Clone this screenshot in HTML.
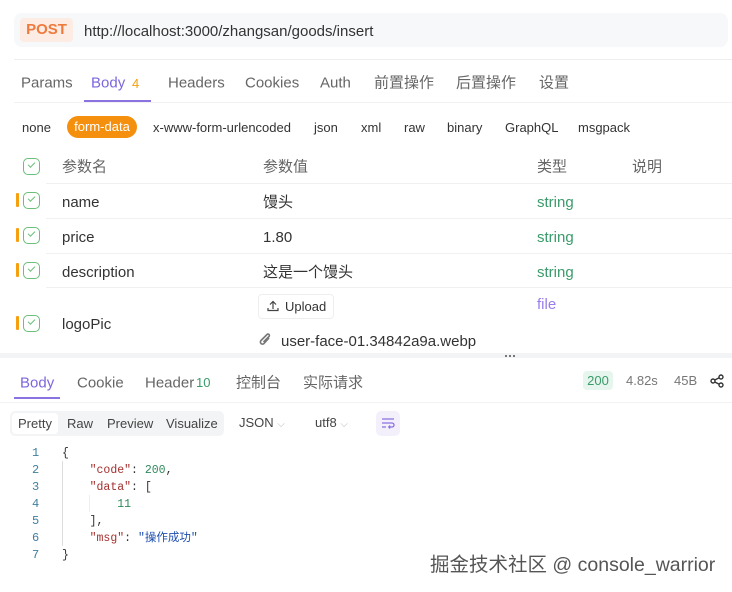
<!DOCTYPE html>
<html><head><meta charset="utf-8"><style>
*{margin:0;padding:0;box-sizing:border-box}
body{width:732px;height:592px;background:#fff;position:relative;overflow:hidden;font-family:"Liberation Sans","Noto Sans CJK SC",sans-serif;color:#333;line-height:1.2}
.a{position:absolute;white-space:nowrap}
.t{font-size:15px;color:#666;transform:translateY(1.5px)}
.s{font-size:13px;color:#333}
.cb{position:absolute;width:17px;height:17px;border:1.5px solid #6bbf7a;border-radius:5px}
.cb:after{content:"";position:absolute;left:4px;top:3px;width:6px;height:3px;border-left:1.3px solid #6bbf7a;border-bottom:1.3px solid #6bbf7a;transform:rotate(-45deg)}
.bar{position:absolute;left:16px;width:3px;height:14px;background:#f5a00f;border-radius:1px}
.hl{position:absolute;left:46px;right:0;height:1px;background:#f0f0f2}
.r{font-size:15px;color:#333;transform:translateY(2px)}
.str{color:#3a9b6b;font-size:15px;transform:translateY(2px)}
.mono{font-family:"Liberation Mono",monospace;font-size:11.5px}
.ln{color:#3f7f9f}
</style></head><body>
<div class="a" style="left:14px;top:13px;width:714px;height:34px;background:#f7f8fa;border-radius:8px"></div>
<div class="a" style="left:20px;top:18px;width:53px;height:24px;background:#fdece4;border-radius:4px;color:#ee7a3e;font-weight:bold;font-size:15px;text-align:center;line-height:24px">POST</div>
<div class="a" style="left:84px;top:23px;font-size:15px;color:#333">http://localhost:3000/zhangsan/goods/insert</div>
<div class="a" style="left:14px;top:59px;width:718px;height:1px;background:#eee"></div>
<div class="a t" style="left:21px;top:73px">Params</div>
<div class="a t" style="left:91px;top:73px;color:#7e66dc">Body</div>
<div class="a" style="left:132px;top:76px;font-size:13px;color:#f5a00f">4</div>
<div class="a t" style="left:168px;top:73px">Headers</div>
<div class="a t" style="left:245px;top:73px">Cookies</div>
<div class="a t" style="left:320px;top:73px">Auth</div>
<div class="a t" style="left:374px;top:73px">前置操作</div>
<div class="a t" style="left:456px;top:73px">后置操作</div>
<div class="a t" style="left:539px;top:73px">设置</div>
<div class="a" style="left:84px;top:100px;width:67px;height:2px;background:#8a72e0"></div>
<div class="a" style="left:14px;top:102px;width:718px;height:1px;background:#f2f2f4"></div>
<div class="a s" style="left:22px;top:120px">none</div>
<div class="a" style="left:67px;top:116px;width:70px;height:22px;background:#f5900f;border-radius:11px;color:#fff;font-size:13px;text-align:center;line-height:22px">form-data</div>
<div class="a s" style="left:153px;top:120px">x-www-form-urlencoded</div>
<div class="a s" style="left:314px;top:120px">json</div>
<div class="a s" style="left:361px;top:120px">xml</div>
<div class="a s" style="left:404px;top:120px">raw</div>
<div class="a s" style="left:447px;top:120px">binary</div>
<div class="a s" style="left:505px;top:120px">GraphQL</div>
<div class="a s" style="left:578px;top:120px">msgpack</div>

<div class="cb" style="left:23px;top:158px"></div>
<div class="a t" style="left:62px;top:157px">参数名</div>
<div class="a t" style="left:263px;top:157px">参数值</div>
<div class="a t" style="left:537px;top:157px">类型</div>
<div class="a t" style="left:632px;top:157px">说明</div>
<div class="hl" style="top:183px"></div>
<div class="bar" style="top:193px"></div><div class="cb" style="left:23px;top:192px"></div>
<div class="a r" style="left:62px;top:192px">name</div><div class="a r" style="left:263px;top:192px">馒头</div><div class="a str" style="left:537px;top:192px">string</div>
<div class="hl" style="top:218px"></div>
<div class="bar" style="top:228px"></div><div class="cb" style="left:23px;top:227px"></div>
<div class="a r" style="left:62px;top:227px">price</div><div class="a r" style="left:263px;top:227px">1.80</div><div class="a str" style="left:537px;top:227px">string</div>
<div class="hl" style="top:253px"></div>
<div class="bar" style="top:263px"></div><div class="cb" style="left:23px;top:262px"></div>
<div class="a r" style="left:62px;top:262px">description</div><div class="a r" style="left:263px;top:262px">这是一个馒头</div><div class="a str" style="left:537px;top:262px">string</div>
<div class="hl" style="top:287px"></div>
<div class="bar" style="top:316px"></div><div class="cb" style="left:23px;top:315px"></div>
<div class="a r" style="left:62px;top:314px">logoPic</div>
<div class="a" style="left:258px;top:294px;width:76px;height:25px;border:1px solid #eee;border-radius:4px;font-size:13px;color:#333;line-height:23px;padding-left:26px">Upload</div>
<svg class="a" style="left:267px;top:300px" width="12" height="12" viewBox="0 0 12 12" fill="none" stroke="#444" stroke-width="1.2"><path d="M6 9V1.5M3 4.5L6 1.5 9 4.5M1 8v2.5h10V8"/></svg>
<div class="a" style="left:537px;top:296px;color:#9a7de8;font-size:15px">file</div>
<svg class="a" style="left:259px;top:333px" width="13" height="14" viewBox="0 0 13 14" fill="none" stroke="#777" stroke-width="1.6"><path d="M10 5L5 10.5a2 2 0 01-3-3L8 1.5a1.4 1.4 0 012 2L4.5 9"/></svg>
<div class="a r" style="left:281px;top:331px">user-face-01.34842a9a.webp</div>
<div class="a" style="left:0;top:353px;width:732px;height:5px;background:#f3f4f6"></div>
<div class="a" style="left:505px;top:355px;width:2px;height:2px;background:#777;box-shadow:4px 0 #777,8px 0 #777"></div>

<div class="a t" style="left:20px;top:373px;color:#7e66dc">Body</div>
<div class="a t" style="left:77px;top:373px">Cookie</div>
<div class="a t" style="left:145px;top:373px">Header</div>
<div class="a" style="left:196px;top:375px;font-size:13px;color:#3a9b6b">10</div>
<div class="a t" style="left:236px;top:373px">控制台</div>
<div class="a t" style="left:303px;top:373px">实际请求</div>
<div class="a" style="left:14px;top:397px;width:46px;height:2px;background:#8a72e0"></div>
<div class="a" style="left:583px;top:371px;width:30px;height:19px;background:#e6f6ee;border-radius:4px;color:#3a9b6b;font-size:13px;text-align:center;line-height:19px">200</div>
<div class="a" style="left:626px;top:373px;font-size:13px;color:#777">4.82s</div>
<div class="a" style="left:674px;top:373px;font-size:13px;color:#777">45B</div>
<svg class="a" style="left:710px;top:374px" width="14" height="14" viewBox="0 0 14 14" fill="none" stroke="#333" stroke-width="1.4"><circle cx="3" cy="7" r="2"/><circle cx="11" cy="3" r="2"/><circle cx="11" cy="11" r="2"/><path d="M4.8 6l4.4-2.2M4.8 8l4.4 2.2"/></svg>
<div class="a" style="left:0;top:402px;width:732px;height:1px;background:#f2f2f4"></div>
<div class="a" style="left:10px;top:411px;width:214px;height:25px;background:#f3f4f6;border-radius:5px"></div>
<div class="a" style="left:12px;top:413px;width:46px;height:21px;background:#fff;border-radius:4px"></div>
<div class="a s" style="left:18px;top:416px;color:#444">Pretty</div>
<div class="a s" style="left:67px;top:416px;color:#444">Raw</div>
<div class="a s" style="left:107px;top:416px;color:#444">Preview</div>
<div class="a s" style="left:166px;top:416px;color:#444">Visualize</div>
<div class="a s" style="left:239px;top:415px;color:#444">JSON <span style="color:#bbb;font-size:10px">⌵</span></div>
<div class="a s" style="left:315px;top:415px;color:#444">utf8 <span style="color:#bbb;font-size:10px">⌵</span></div>
<div class="a" style="left:376px;top:411px;width:24px;height:25px;background:#f3f0fc;border-radius:5px"></div>
<svg class="a" style="left:381px;top:417px" width="14" height="12" viewBox="0 0 14 12" fill="none" stroke="#8a6fe0" stroke-width="1.3"><path d="M1 2h12M1 6h10a2 2 0 010 4H8M1 10h4M9 8.5L7.8 10 9 11.5"/></svg>

<div class="a" style="left:62px;top:461px;width:1px;height:85px;background:#ddd"></div>
<div class="a" style="left:89px;top:495px;width:1px;height:17px;background:#eee"></div>
<div class="a mono ln" style="left:32px;top:445px;line-height:17px;white-space:pre;font-size:12px">1
2
3
4
5
6
7</div>
<div class="a mono" style="left:62px;top:445px;line-height:17px;white-space:pre;color:#333">{
    <span style="color:#a3312f">"code"</span>: <span style="color:#2f8a5c">200</span>,
    <span style="color:#a3312f">"data"</span>: [
        <span style="color:#2f8a5c">11</span>
    ],
    <span style="color:#a3312f">"msg"</span>: <span style="color:#1f4fb0;font-family:'Liberation Mono','Noto Sans CJK SC',monospace">"操作成功"</span>
}</div>
<div class="a" style="left:430px;top:554px;font-size:19.5px;color:#555;text-shadow:0 0 2px #fff">掘金技术社区 @ console_warrior</div>
</body></html>
